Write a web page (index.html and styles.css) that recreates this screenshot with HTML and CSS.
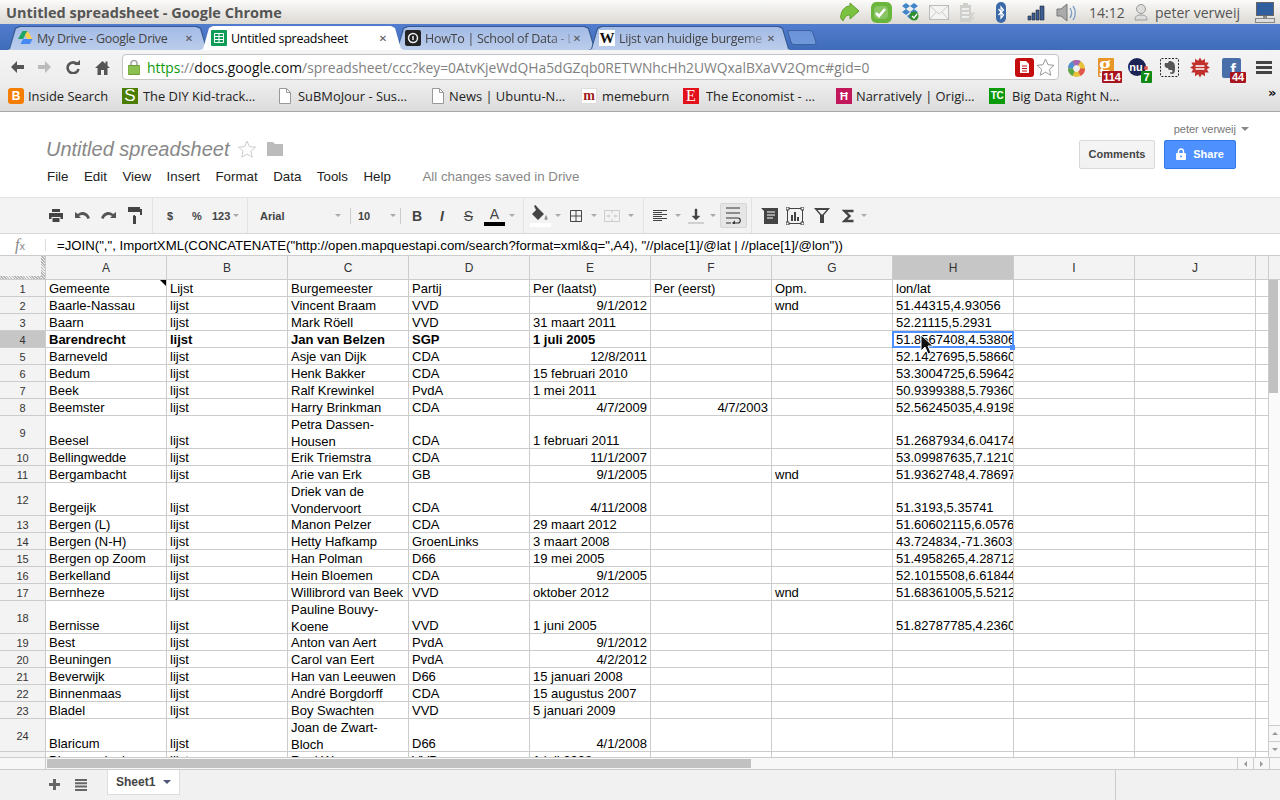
FILE: index.html
```html
<!DOCTYPE html>
<html lang="en">
<head>
<meta charset="utf-8">
<title>Untitled spreadsheet - Google Chrome</title>
<link rel="stylesheet" href="styles.css">
</head>
<body>
<header class="titlebar">
  <span class="wintitle">Untitled spreadsheet - Google Chrome</span>
  <div class="tray">
    <svg class="tray-icons" width="240" height="24" viewBox="838 0 240 24">
      <path d="M842 15c1-6 5-9 9-9V3l9 8-9 8v-4c-3 0-5 1-7 6-2-2-3-4-2-6z" fill="#7cc242" stroke="#5f9e2c"/>
      <path d="M877 2h10c4 0 6 3 6 6v8c0 5-3 7-6 7h-9c-4 0-6-3-6-6V8c0-3 2-6 5-6z" fill="#6ab63c"/>
      <rect x="875" y="6" width="14" height="13" rx="4" fill="#eaf5e0" opacity=".25"/>
      <path d="M877 13l3 3 6-7" fill="none" stroke="#fff" stroke-width="2.6"/>
      <path d="M907 3l4 3-4 3-4-3zM915 3l4 3-4 3-4-3zM907 9l4 3-4 3-4-3zM915 9l4 3-4 3-4-3zM911 14l3 2-3 3-3-3z" fill="#3f87c9"/>
      <circle cx="915" cy="16" r="4.5" fill="#2f8f2f"/><path d="M913 16l2 2 3-4" fill="none" stroke="#fff" stroke-width="1.3"/>
      <rect x="930.500" y="5.500" width="19" height="14" fill="#f4f4f2" stroke="#bbb"/>
      <path d="M931 6l9 8 9-8M931 19l6-7M949 19l-6-7" fill="none" stroke="#ccc"/>
      <path d="M964 3h5v2h3v17h-11V5h3z" fill="#cfcfcb"/><path d="M963 9h7M963 13h7M963 17h7" stroke="#eee" stroke-width="2"/>
      <path d="M972 13l4-1-3 5h3l-5 6 1-6h-2z" fill="#d4d4d0"/>
      <rect x="997" y="2" width="10" height="21" rx="5" fill="#3c69a8"/>
      <path d="M999.500 9l5 6-2.500 3V7l2.500 3-5 5" fill="none" stroke="#fff" stroke-width="1.200"/>
      <path d="M1029 16h3v4h-3zM1033 13h3v7h-3zM1037 10h3v10h-3zM1041 6h4v14h-4z" fill="#3b5f93" stroke="#223" stroke-width=".6"/>
      <path d="M1058 9h4l6-5v17l-6-5h-4z" fill="#aaa" stroke="#777"/>
      <path d="M1071 8c2 3 2 7 0 10M1074 6c3 4 3 10 0 14" fill="none" stroke="#7a9cc6" stroke-width="1.300"/>
    </svg>
    <span class="clock">14:12</span>
    <svg class="user-icon" width="14" height="20" viewBox="0 0 14 20"><circle cx="7" cy="7" r="4.500" fill="#ddd" stroke="#999"/><path d="M1 18c0-4 2-5 6-5s6 1 6 5z" fill="#ddd" stroke="#999"/></svg>
    <span class="username">peter verweij</span>
    <svg class="monitor" width="22" height="24" viewBox="0 0 22 24"><rect x="2.500" y="2.500" width="17" height="13" fill="#2f5f9e" stroke="#666"/><path d="M9 16h4v2H9z" fill="#888"/><rect x="1.500" y="18.500" width="19" height="4" fill="#ddd" stroke="#888"/></svg>
  </div>
</header>

<nav class="tabstrip">
  <div class="tab">
    <svg class="fav" width="16" height="16" viewBox="0 0 16 16"><path d="M5.500 1h5L6 9H1z" fill="#1fa463"/><path d="M10.500 1l5 8h-5L8 5z" fill="#ffd04b"/><path d="M3.500 14h9.500l2.500-5H6z" fill="#4688f4"/></svg>
    <span class="tab-title">My Drive - Google Drive</span><span class="tab-x">✕</span>
  </div>
  <div class="tab active">
    <svg class="fav" width="16" height="16" viewBox="0 0 16 16"><rect width="16" height="16" rx="1" fill="#0f9d58"/><path d="M3.500 3.500h9v9h-9zM3.500 6.500h9M3.500 9.500h9M8 3.500v9" fill="none" stroke="#fff"/></svg>
    <span class="tab-title">Untitled spreadsheet</span><span class="tab-x">✕</span>
  </div>
  <div class="tab">
    <svg class="fav" width="16" height="16" viewBox="0 0 16 16"><rect width="16" height="16" rx="2" fill="#222"/><circle cx="8" cy="8" r="4.500" fill="none" stroke="#eee" stroke-width="1.500"/><path d="M8 6v4" stroke="#eee" stroke-width="1.500"/></svg>
    <span class="tab-title fade">HowTo | School of Data - L</span><span class="tab-x">✕</span>
  </div>
  <div class="tab">
    <span class="wiki-fav">W</span>
    <span class="tab-title fade">Lijst van huidige burgeme</span><span class="tab-x">✕</span>
  </div>
  <div class="newtab"></div>
</nav>

<div class="navbar">
  <svg class="nav-ic first" width="14" height="14" viewBox="0 0 14 14"><path d="M7 1L1 7l6 6V9h7V5H7z" fill="#555"/></svg>
  <svg class="nav-ic gap14" width="14" height="14" viewBox="0 0 14 14"><path d="M7 1l6 6-6 6V9H0V5h7z" fill="#bbb"/></svg>
  <svg class="nav-ic gap14" width="14" height="14" viewBox="0 0 14 14"><path d="M11.500 4.500A5.500 5.500 0 1 0 12.500 9" fill="none" stroke="#555" stroke-width="2.600"/><path d="M8 5h6V0z" fill="#555"/></svg>
  <svg class="nav-ic gap15" width="15" height="15" viewBox="0 0 15 15"><path d="M7.500 1L0 8h2.500v7h3.500v-5h3v5h3.500V8H15l-2.500-2.300V1.500h-2v2.300z" fill="#555"/></svg>
  <div class="omnibox">
    <svg class="lock" width="12" height="16" viewBox="0 0 12 16"><path d="M3 7V4.500a3 3 0 0 1 6 0V7" fill="none" stroke="#aaa" stroke-width="1.600"/><rect y="6.500" width="12" height="9" rx="1" fill="#8cc152" stroke="#6a9a35"/></svg>
    <span class="url"><span class="scheme">https</span><span class="dim">://</span><span class="host">docs.google.com</span><span class="dim">/spreadsheet/ccc?key=0AtvKjeWdQHa5dGZqb0RETWNhcHh2UWQxalBXaVV2Qmc#gid=0</span></span>
    <svg class="omni-end" width="40" height="20" viewBox="0 0 40 20">
      <rect y="1" width="19" height="19" rx="3" fill="#c40d0d"/><path d="M5 4h6l3 3v9H5z" fill="#fff"/><path d="M7 9h5M7 11.500h5M7 14h5" stroke="#c40d0d"/>
      <path d="M30.500 2l2.500 5.700 6 .6-4.600 4 1.400 6-5.300-3.200-5.300 3.200 1.400-6-4.600-4 6-.6z" fill="#fff" stroke="#999"/>
    </svg>
  </div>
  <svg class="ext" width="220" height="34" viewBox="1060 50 220 34">
    <g fill="none" stroke-width="5"><circle cx="1076.500" cy="68.500" r="6" stroke="#e8c33a"/><circle cx="1076.500" cy="68.500" r="6" stroke="#e2574c" pathLength="6" stroke-dasharray="1 5"/><circle cx="1076.500" cy="68.500" r="6" stroke="#5ba84a" pathLength="6" stroke-dasharray="1 5" stroke-dashoffset="-2"/><circle cx="1076.500" cy="68.500" r="6" stroke="#4f8fd6" pathLength="6" stroke-dasharray="1 5" stroke-dashoffset="-3"/><circle cx="1076.500" cy="68.500" r="6" stroke="#a565b5" pathLength="6" stroke-dasharray="1 5" stroke-dashoffset="-4"/></g>
    <rect x="1098" y="58" width="16" height="19" rx="1" fill="#e8952a"/><text x="1099" y="72" class="ext-g">g</text>
    <rect x="1102" y="71" width="20" height="12" rx="1" fill="#a8141e"/><text x="1112" y="81" class="badge">114</text>
    <circle cx="1137" cy="67" r="9" fill="#1c2455"/><text x="1136" y="71" class="ext-nu">nu</text><circle cx="1146" cy="68" r="2" fill="#e2574c"/>
    <rect x="1141" y="71" width="11" height="12" rx="1" fill="#0f8a12"/><text x="1146.500" y="81" class="badge">7</text>
    <rect x="1160.500" y="58.500" width="18" height="18" rx="1" fill="#eee" stroke="#222" stroke-dasharray="2 1.500"/>
    <path d="M1165 63h3l1-2c4 0 6 2 6 6s0 7-3 7c-2 0-2-1-2-2 2 1 3 0 2-2-3 0-4 0-4-2-3 0-4-2-3-5z" fill="#555"/>
    <polygon points="1200,57.500 1201.800,60.700 1205,58.800 1204.900,62.600 1208.700,62.500 1206.800,65.700 1210,67.500 1206.800,69.300 1208.700,72.500 1204.900,72.400 1205,76.200 1201.800,74.300 1200,77.500 1198.200,74.300 1195,76.200 1195.100,72.400 1191.300,72.500 1193.200,69.300 1190,67.500 1193.200,65.700 1191.300,62.500 1195.100,62.600 1195,58.800 1198.200,60.700" fill="#c0302c"/>
    <path d="M1195.500 66h9M1195.500 69h9" stroke="#fff" stroke-width="1.500"/>
    <rect x="1222" y="58" width="19" height="20" rx="2" fill="#4a6ea9"/><text x="1233" y="75" class="ext-f">f</text>
    <rect x="1230" y="72" width="16" height="11" rx="1" fill="#a8141e"/><text x="1238" y="81" class="badge">44</text>
    <path d="M1256 61h16v3h-16zM1256 66h16v3h-16zM1256 71h16v3h-16z" fill="#444"/>
  </svg>
</div>

<div class="bookmarks">
  <div class="bm"><span class="bi bi-blogger">B</span><span>Inside Search</span></div>
  <div class="bm"><span class="bi bi-s">S</span><span>The DIY Kid-track…</span></div>
  <div class="bm"><svg class="bi-doc" width="14" height="16" viewBox="0 0 14 16"><path d="M1.500.5h7l4 4v11h-11z" fill="#fff" stroke="#999"/><path d="M8.500.5v4h4" fill="none" stroke="#999"/></svg><span>SuBMoJour - Sus…</span></div>
  <div class="bm"><svg class="bi-doc" width="14" height="16" viewBox="0 0 14 16"><path d="M1.500.5h7l4 4v11h-11z" fill="#fff" stroke="#999"/><path d="M8.500.5v4h4" fill="none" stroke="#999"/></svg><span>News | Ubuntu-N…</span></div>
  <div class="bm"><span class="bi bi-m">m</span><span>memeburn</span></div>
  <div class="bm"><span class="bi bi-e">E</span><span>The Economist - …</span></div>
  <div class="bm"><span class="bi bi-n">Ħ</span><span>Narratively | Origi…</span></div>
  <div class="bm"><span class="bi bi-tc">TC</span><span>Big Data Right N…</span></div>
  <span class="more">»</span>
</div>

<section class="dochead">
  <div class="doc-left">
    <div class="doc-title">
      <h1>Untitled spreadsheet</h1>
      <svg class="doc-star" width="18" height="18" viewBox="0 0 18 18"><path d="M9 1l2.400 5.600 6.100.6-4.600 4 1.400 6L9 14l-5.300 3.200 1.400-6-4.600-4 6.100-.6z" fill="#fff" stroke="#ccc"/></svg>
      <svg class="doc-folder" width="16" height="14" viewBox="0 0 16 14"><path d="M0 0h6l2 2h8v12H0z" fill="#bbb"/></svg>
    </div>
    <div class="menus">
      <span>File</span><span>Edit</span><span>View</span><span>Insert</span><span>Format</span><span>Data</span><span>Tools</span><span>Help</span>
      <span class="saved">All changes saved in Drive</span>
    </div>
  </div>
  <div class="doc-right">
    <div class="account">peter verweij<i class="caret"></i></div>
    <div class="doc-buttons">
      <button class="btn">Comments</button>
      <button class="btn share"><svg width="10" height="12" viewBox="0 0 10 12"><path d="M2.500 5V3.500a2.500 2.500 0 0 1 5 0V5" fill="none" stroke="#fff" stroke-width="1.400"/><rect y="5" width="10" height="7" rx="1" fill="#fff"/><circle cx="5" cy="8.500" r="1" fill="#4d90fe"/></svg>Share</button>
    </div>
  </div>
</section>

<div class="toolbar">
  <svg class="m0" width="14" height="13" viewBox="0 0 14 13"><path d="M3 0h8v3H3zM0 4h14v6h-2.500V8h-9v2H0zM3.500 9h7v4h-7z" fill="#444"/></svg>
  <svg class="m12" width="15" height="10" viewBox="0 0 15 10"><path d="M0 1v6h6L4 5c3-2 7-1 8.500 3L15 7C13 1 7-1 2.800 3z" fill="#555"/></svg>
  <svg class="m11" width="15" height="10" viewBox="0 0 15 10"><path d="M15 1v6H9l2-2C8 3 4 4 2.500 8L0 7C2 1 8-1 12.200 3z" fill="#555"/></svg>
  <svg class="m12" width="14" height="17" viewBox="0 0 14 17"><path d="M0 0h12v2h2v6H7v2H5.500V8H12V5H0z" fill="#444"/><rect x="5" y="9" width="3" height="8" fill="#444"/></svg>
  <i class="sep m10"></i>
  <span class="tt w8 m14">$</span>
  <span class="tt w11 m17">%</span>
  <span class="tt w17 m9">123</span>
  <i class="arrow m4"></i>
  <i class="sep m8"></i>
  <span class="tt w75 m12">Arial</span>
  <i class="arrow"></i>
  <i class="sep short m9"></i>
  <span class="tt w32 m7">10</span>
  <i class="arrow"></i>
  <i class="sep short m4"></i>
  <span class="tt fmt w10 m11">B</span>
  <span class="tt fmt ital w10 m15">I</span>
  <span class="tt fmt strike w11 m16">S</span>
  <span class="colorA m10">A</span>
  <i class="arrow m4"></i>
  <i class="sep m8"></i>
  <svg class="m6" width="21" height="22" viewBox="0 0 21 22"><path d="M5 1l1.500-1L9 3l6 6-6 6-6-6 4-4z" fill="#444" transform="translate(-1 0)"/><path d="M16 10c2 3 2 5 0 5s-2-2 0-5z" fill="#999"/><rect y="18" width="21" height="4" fill="#fff"/></svg>
  <i class="arrow m4"></i>
  <svg class="m9" width="12" height="12" viewBox="0 0 12 12"><path d="M.5.500h11v11H.500zM6 .5v11M.5 6h11" fill="none" stroke="#444"/></svg>
  <i class="arrow m9"></i>
  <svg class="m7" width="16" height="12" viewBox="0 0 16 12"><path d="M.5.500h15v11H.500zM8 .5v3M8 8.500v3" fill="none" stroke="#ccc"/><path d="M2 6h4M4.500 4.500L6 6 4.500 7.500M14 6h-4M11.500 4.500L10 6l1.500 1.500" fill="none" stroke="#ccc"/></svg>
  <i class="arrow m8"></i>
  <i class="sep m9"></i>
  <svg class="m9" width="14" height="12" viewBox="0 0 14 12"><path d="M0 .5h14M0 2.500h9M0 4.500h14M0 6.500h9M0 8.500h14M0 10.500h9" stroke="#444"/></svg>
  <i class="arrow m8"></i>
  <svg class="m7" width="16" height="16" viewBox="0 0 16 16"><path d="M7 1h2v7h3l-4 4-4-4h3zM0 15h16" fill="#444" stroke="#444" stroke-width=".4"/></svg>
  <i class="arrow m6"></i>
  <div class="wrapbtn m4"><svg width="16" height="17" viewBox="0 0 16 17"><path d="M0 1h14M0 6h14M0 11h7M0 16h5M7 11h5c3 0 3 5 0 5H8" fill="none" stroke="#333" stroke-width="1.200"/><path d="M9 13.500v5l-3-2.500z" fill="#333"/></svg></div>
  <i class="sep m4"></i>
  <svg class="m9" width="17" height="16" viewBox="0 0 17 16"><path d="M0 0h17v16H3V3z" fill="#444"/><path d="M6 4h8M6 7h8M6 10h6" stroke="#fff"/></svg>
  <svg class="m8" width="18" height="18" viewBox="0 0 18 18"><rect x="1.500" y="1.500" width="15" height="15" fill="#f3f3f3" stroke="#444"/><path d="M5 8h2v6H5zM8 5h2v9H8zM11 10h2v4h-2z" fill="#444"/><path d="M0 0h3v3H0zM15 0h3v3h-3zM0 15h3v3H0zM15 15h3v3h-3z" fill="#f3f3f3" stroke="#444"/></svg>
  <svg class="m10" width="16" height="15" viewBox="0 0 16 15"><path d="M0 0h16l-6 7v8H6V7zM3.500 2l4 4.500h1l4-4.500z" fill="#444" fill-rule="evenodd"/></svg>
  <svg class="m12" width="12" height="14" viewBox="0 0 12 14"><path d="M11.500 2H2.500l5 5-5 5h9" fill="none" stroke="#444" stroke-width="2.400"/></svg>
  <i class="arrow m7"></i>
</div>

<div class="formula">
  <span class="fx">f<small>x</small></span>
  <i class="fsep"></i>
  <span class="ftext">=JOIN(",", ImportXML(CONCATENATE("http://open.mapquestapi.com/search?format=xml&amp;q=",A4), "//place[1]/@lat | //place[1]/@lon"))</span>
</div>

<main class="sheet">
  <div class="grid">
    <div class="row head"><div class="corner"></div><div>A</div><div>B</div><div>C</div><div>D</div><div>E</div><div>F</div><div>G</div><div class="on">H</div><div>I</div><div>J</div><div></div></div>
    <div class="row"><div class="n">1</div><div class="noted">Gemeente</div><div>Lijst</div><div>Burgemeester</div><div>Partij</div><div>Per (laatst)</div><div>Per (eerst)</div><div>Opm.</div><div>lon/lat</div><div></div><div></div><div></div></div>
    <div class="row"><div class="n">2</div><div>Baarle-Nassau</div><div>lijst</div><div>Vincent Braam</div><div>VVD</div><div class="r">9/1/2012</div><div></div><div>wnd</div><div>51.44315,4.93056</div><div></div><div></div><div></div></div>
    <div class="row"><div class="n">3</div><div>Baarn</div><div>lijst</div><div>Mark Röell</div><div>VVD</div><div>31 maart 2011</div><div></div><div></div><div>52.21115,5.2931</div><div></div><div></div><div></div></div>
    <div class="row bold"><div class="n on">4</div><div>Barendrecht</div><div>lijst</div><div>Jan van Belzen</div><div>SGP</div><div>1 juli 2005</div><div></div><div></div><div class="plain">51.8567408,4.53806</div><div></div><div></div><div></div></div>
    <div class="row"><div class="n">5</div><div>Barneveld</div><div>lijst</div><div>Asje van Dijk</div><div>CDA</div><div class="r">12/8/2011</div><div></div><div></div><div>52.1427695,5.58660</div><div></div><div></div><div></div></div>
    <div class="row"><div class="n">6</div><div>Bedum</div><div>lijst</div><div>Henk Bakker</div><div>CDA</div><div>15 februari 2010</div><div></div><div></div><div>53.3004725,6.59642</div><div></div><div></div><div></div></div>
    <div class="row"><div class="n">7</div><div>Beek</div><div>lijst</div><div>Ralf Krewinkel</div><div>PvdA</div><div>1 mei 2011</div><div></div><div></div><div>50.9399388,5.79360</div><div></div><div></div><div></div></div>
    <div class="row"><div class="n">8</div><div>Beemster</div><div>lijst</div><div>Harry Brinkman</div><div>CDA</div><div class="r">4/7/2009</div><div class="r">4/7/2003</div><div></div><div>52.56245035,4.9198</div><div></div><div></div><div></div></div>
    <div class="row tall"><div class="n">9</div><div>Beesel</div><div>lijst</div><div class="wrap">Petra Dassen-Housen</div><div>CDA</div><div>1 februari 2011</div><div></div><div></div><div>51.2687934,6.04174</div><div></div><div></div><div></div></div>
    <div class="row"><div class="n">10</div><div>Bellingwedde</div><div>lijst</div><div>Erik Triemstra</div><div>CDA</div><div class="r">11/1/2007</div><div></div><div></div><div>53.09987635,7.1210</div><div></div><div></div><div></div></div>
    <div class="row"><div class="n">11</div><div>Bergambacht</div><div>lijst</div><div>Arie van Erk</div><div>GB</div><div class="r">9/1/2005</div><div></div><div>wnd</div><div>51.9362748,4.78697</div><div></div><div></div><div></div></div>
    <div class="row tall"><div class="n">12</div><div>Bergeijk</div><div>lijst</div><div class="wrap">Driek van de Vondervoort</div><div>CDA</div><div class="r">4/11/2008</div><div></div><div></div><div>51.3193,5.35741</div><div></div><div></div><div></div></div>
    <div class="row"><div class="n">13</div><div>Bergen (L)</div><div>lijst</div><div>Manon Pelzer</div><div>CDA</div><div>29 maart 2012</div><div></div><div></div><div>51.60602115,6.0576</div><div></div><div></div><div></div></div>
    <div class="row"><div class="n">14</div><div>Bergen (N-H)</div><div>lijst</div><div>Hetty Hafkamp</div><div>GroenLinks</div><div>3 maart 2008</div><div></div><div></div><div>43.724834,-71.36036</div><div></div><div></div><div></div></div>
    <div class="row"><div class="n">15</div><div>Bergen op Zoom</div><div>lijst</div><div>Han Polman</div><div>D66</div><div>19 mei 2005</div><div></div><div></div><div>51.4958265,4.28712</div><div></div><div></div><div></div></div>
    <div class="row"><div class="n">16</div><div>Berkelland</div><div>lijst</div><div>Hein Bloemen</div><div>CDA</div><div class="r">9/1/2005</div><div></div><div></div><div>52.1015508,6.61844</div><div></div><div></div><div></div></div>
    <div class="row"><div class="n">17</div><div>Bernheze</div><div>lijst</div><div>Willibrord van Beek</div><div>VVD</div><div>oktober 2012</div><div></div><div>wnd</div><div>51.68361005,5.5212</div><div></div><div></div><div></div></div>
    <div class="row tall"><div class="n">18</div><div>Bernisse</div><div>lijst</div><div class="wrap">Pauline Bouvy-Koene</div><div>VVD</div><div>1 juni 2005</div><div></div><div></div><div>51.82787785,4.2360</div><div></div><div></div><div></div></div>
    <div class="row"><div class="n">19</div><div>Best</div><div>lijst</div><div>Anton van Aert</div><div>PvdA</div><div class="r">9/1/2012</div><div></div><div></div><div></div><div></div><div></div><div></div></div>
    <div class="row"><div class="n">20</div><div>Beuningen</div><div>lijst</div><div>Carol van Eert</div><div>PvdA</div><div class="r">4/2/2012</div><div></div><div></div><div></div><div></div><div></div><div></div></div>
    <div class="row"><div class="n">21</div><div>Beverwijk</div><div>lijst</div><div>Han van Leeuwen</div><div>D66</div><div>15 januari 2008</div><div></div><div></div><div></div><div></div><div></div><div></div></div>
    <div class="row"><div class="n">22</div><div>Binnenmaas</div><div>lijst</div><div>André Borgdorff</div><div>CDA</div><div>15 augustus 2007</div><div></div><div></div><div></div><div></div><div></div><div></div></div>
    <div class="row"><div class="n">23</div><div>Bladel</div><div>lijst</div><div>Boy Swachten</div><div>VVD</div><div>5 januari 2009</div><div></div><div></div><div></div><div></div><div></div><div></div></div>
    <div class="row tall"><div class="n">24</div><div>Blaricum</div><div>lijst</div><div class="wrap">Joan de Zwart-Bloch</div><div>D66</div><div class="r">4/1/2008</div><div></div><div></div><div></div><div></div><div></div><div></div></div>
    <div class="row"><div class="n">25</div><div>Bloemendaal</div><div>lijst</div><div>Roel Wever</div><div>VVD</div><div>1 juli 2008</div><div></div><div></div><div></div><div></div><div></div><div></div></div>
  </div>
  <div class="vbar">
    <div class="vhead"></div>
    <div class="vthumb"></div>
    <div class="vbtns"><div class="vbtn"><i class="up"></i></div><div class="vbtn"><i class="down"></i></div></div>
  </div>
  <div class="selection"><i class="handle"></i></div>
  <svg class="cursor" width="14" height="21" viewBox="0 0 14 21"><path d="M1 1v16l4-4 3 7 3-1-3-7h5z" fill="#111" stroke="#fff"/></svg>
</main>

<div class="hbar">
  <div class="hleft"></div>
  <div class="htrack"><div class="hthumb"></div></div>
  <div class="hbtn"><i class="left"></i></div>
  <div class="hbtn"><i class="right"></i></div>
  <div class="hend"></div>
</div>

<footer class="sheetbar">
  <svg class="add" width="11" height="11" viewBox="0 0 11 11"><path d="M4 0h3v4h4v3H7v4H4V7H0V4h4z" fill="#666"/></svg>
  <svg class="list" width="12" height="12" viewBox="0 0 12 12"><path d="M0 0h12v2H0zM0 3.300h12v2H0zM0 6.600h12v2H0zM0 10h12v2H0z" fill="#666"/></svg>
  <div class="sheet-tab">Sheet1<i class="tab-caret"></i></div>
  <i class="status-sep"></i>
</footer>
</body>
</html>
```
FILE: styles.css
```css
* { box-sizing: border-box; }
html, body { margin: 0; padding: 0; width: 1280px; height: 800px; overflow: hidden; background: #fff; }
body { display: flex; flex-direction: column; font-family: "Liberation Sans", Arial, sans-serif; font-size: 13px; color: #000; }
svg { display: block; flex: none; }
i { display: block; flex: none; }

/* window title bar */
.titlebar { height: 24px; flex: none; display: flex; align-items: center; padding: 0 4px 0 6px; background: linear-gradient(#fbfbfa, #dcd9d3); font-family: "Open Sans", sans-serif; color: #555; }
.wintitle { font-size: 14.5px; font-weight: 700; white-space: nowrap; }
.tray { margin-left: auto; display: flex; align-items: center; }
.tray-icons { margin-right: 12px; }
.clock { font-size: 14px; width: 35px; white-space: nowrap; }
.user-icon { margin-left: 10px; }
.username { font-size: 14px; margin-left: 7px; width: 88px; white-space: nowrap; }
.monitor { margin-left: 11px; }

/* tabs */
.tabstrip { height: 26px; flex: none; display: flex; align-items: flex-end; padding-left: 6px; background: linear-gradient(#527cce, #3f6cba); font-family: "Open Sans", sans-serif; }
.tab { position: relative; width: 204px; height: 24px; margin-right: -10px; padding: 0 15px 0 11px; display: flex; align-items: center; font-size: 12.5px; letter-spacing: -.27px; color: #444;
  background: #34588f;
  clip-path: polygon(0 100%, 3px 96%, 9px 8%, 13px 0, calc(100% - 13px) 0, calc(100% - 9px) 8%, calc(100% - 3px) 96%, 100% 100%); }
.tab::before { content: ""; position: absolute; inset: 1px 1px 0 1px; background: linear-gradient(#a3bbe6, #bccdeb);
  clip-path: polygon(0 100%, 3px 96%, 9px 8%, 13px 0, calc(100% - 13px) 0, calc(100% - 9px) 8%, calc(100% - 3px) 96%, 100% 100%); }
.tab.active { z-index: 2; color: #000; background: #fff; }
.tab.active::before { background: #fff; }
.tab > * { position: relative; }
.fav { margin-right: 4px; }
.wiki-fav { flex: none; width: 16px; height: 16px; margin-right: 4px; background: #fff; color: #111; font: 700 15px/16px "Liberation Serif", serif; letter-spacing: 0; text-align: center; }
.tab-title { flex: 1; min-width: 0; white-space: nowrap; }
.fade { color: #444; -webkit-mask-image: linear-gradient(to right, #000 85%, rgba(0,0,0,.25)); mask-image: linear-gradient(to right, #000 85%, rgba(0,0,0,.25)); }
.tab-x { flex: none; width: 12px; font-size: 10px; font-weight: 700; color: #555; text-align: center; font-family: "DejaVu Sans", sans-serif; letter-spacing: 0; }
.newtab { width: 26px; height: 15px; margin: 0 0 5px 7px; background: linear-gradient(#6b92d8, #7099dc); border: 1px solid #3d639f; border-radius: 3px; transform: skewX(18deg); }

/* address bar */
.navbar { height: 34px; flex: none; display: flex; align-items: center; background: linear-gradient(#f4f4f4, #ededed); }
.first { margin-left: 10px; }
.gap14 { margin-left: 14px; }
.gap15 { margin-left: 15px; }
.omnibox { width: 937px; height: 26px; margin-left: 12px; padding: 0 3px 0 5px; display: flex; align-items: center; background: #fff; border: 1px solid #c4c4c4; border-radius: 4px; font-family: "Open Sans", sans-serif; }
.lock { margin-right: 7px; }
.url { font-size: 13.83px; white-space: nowrap; flex: 1; min-width: 0; overflow: hidden; }
.scheme { color: #0a9a0a; }
.dim { color: #808080; }
.host { color: #111; }
.omni-end { margin-left: 4px; }
.ext { margin-left: 1px; }
.ext-g { font: 700 24px "Liberation Serif", serif; fill: #fff; }
.ext-nu { font: 700 11px "Liberation Sans", sans-serif; fill: #fff; text-anchor: middle; }
.ext-f { font: 700 17px "Liberation Sans", sans-serif; fill: #fff; text-anchor: middle; }
.badge { font: 700 11px "Liberation Sans", sans-serif; fill: #fff; text-anchor: middle; }

/* bookmarks */
.bookmarks { height: 28px; flex: none; display: flex; align-items: center; padding: 0 0 3px 8px; border-bottom: 1px solid #a8a8a8; background: linear-gradient(#ededed, #dcdcdc); font-family: "Open Sans", sans-serif; font-size: 12.9px; color: #222; white-space: nowrap; }
.bm { display: flex; align-items: center; gap: 5px; flex: none; }
.bm:nth-child(1) { width: 114px; gap: 4px; }
.bm:nth-child(2) { width: 156px; }
.bm:nth-child(3) { width: 153px; }
.bm:nth-child(4) { width: 150px; gap: 3px; }
.bm:nth-child(5) { width: 102px; }
.bm:nth-child(6) { width: 153px; gap: 7px; }
.bm:nth-child(7) { width: 153px; gap: 4px; }
.bm:nth-child(8) { width: 279px; gap: 7px; }
.bi { flex: none; width: 16px; height: 16px; display: flex; align-items: center; justify-content: center; font: 700 12px/16px "Liberation Sans", sans-serif; color: #fff; }
.bi-blogger { background: #f57d00; border-radius: 3px; }
.bi-s { background: #4a7d00; font: 400 17px/16px "Liberation Sans", sans-serif; }
.bi-m { background: #fff; color: #a11a1a; border: 1px solid #ddd; font: 700 14px/12px "Liberation Serif", serif; }
.bi-e { background: #e2111a; font: 400 16px/16px "Liberation Serif", serif; }
.bi-n { background: #c2185b; font-size: 11px; }
.bi-tc { background: #0a9a0a; font-size: 10px; letter-spacing: -.5px; }
.bi-doc { margin-right: 1px; }
.more { margin-bottom: 8px; font: 700 13px "DejaVu Sans", sans-serif; color: #111; }

/* document header */
.dochead { height: 85px; flex: none; display: flex; justify-content: space-between; }
.doc-left { padding: 25px 0 0 46px; }
.doc-title { display: flex; align-items: center; height: 24px; }
.doc-title h1 { margin: 0; font-size: 20px; font-weight: 400; font-style: italic; color: #888; white-space: nowrap; }
.doc-star { margin-left: 9px; }
.doc-folder { margin-left: 11px; }
.menus { display: flex; gap: 15.5px; margin: 8px 0 0 1px; line-height: 16px; font-size: 13.33px; color: #222; }
.saved { margin-left: 16px; color: #888; }
.doc-right { padding: 10px 44px 0 0; display: flex; flex-direction: column; align-items: flex-end; }
.account { display: flex; align-items: center; margin-right: -13px; height: 14px; font-size: 11px; color: #777; }
.caret { margin-left: 5px; border: 4px solid transparent; border-top-color: #888; border-bottom-width: 0; }
.doc-buttons { display: flex; gap: 9px; margin-top: 4px; }
.btn { height: 29px; width: 76px; padding: 0 0 2px; border: 1px solid #d9d9d9; border-radius: 2px; background: linear-gradient(#f5f5f5, #f1f1f1); font: 700 11px "Liberation Sans", sans-serif; color: #444; }
.share { width: 72px; display: flex; align-items: center; justify-content: center; gap: 7px; background: #4d90fe; border-color: #3079ed; color: #fff; }

/* toolbar */
.toolbar { height: 37px; flex: none; display: flex; align-items: center; padding-left: 49px; background: #f3f3f3; border-top: 1px solid #e2e2e2; border-bottom: 1px solid #d9d9d9; }
.m0 { margin-left: 0; } .m4 { margin-left: 4px; } .m6 { margin-left: 6px; } .m7 { margin-left: 7px; } .m8 { margin-left: 8px; } .m9 { margin-left: 9px; } .m10 { margin-left: 10px; } .m11 { margin-left: 11px; } .m12 { margin-left: 12px; } .m14 { margin-left: 14px; } .m15 { margin-left: 15px; } .m16 { margin-left: 16px; } .m17 { margin-left: 17px; }
.sep { width: 1px; align-self: stretch; background: #e2e2e2; }
.sep.short { align-self: center; height: 16px; background: #ccc; }
.arrow { width: 6px; height: 3px; border: 3px solid transparent; border-top-color: #aaa; border-bottom-width: 0; }
.tt { flex: none; font-size: 11px; font-weight: 700; color: #444; white-space: nowrap; }
.w8 { width: 8px; } .w10 { width: 10px; } .w11 { width: 11px; } .w17 { width: 17px; } .w32 { width: 32px; } .w75 { width: 75px; }
.fmt { font-size: 14px; text-align: center; }
.ital { font-style: italic; }
.strike { text-decoration: line-through; font-weight: 400; }
.colorA { flex: none; width: 21px; height: 19px; align-self: center; margin-top: 2px; text-align: center; font-size: 14px; line-height: 14px; color: #444; border-bottom: 4px solid #000; }
.wrapbtn { width: 27px; height: 25px; display: flex; align-items: center; justify-content: center; background: #e6e6e6; border: 1px solid #d6d6d6; border-radius: 2px; }

/* formula bar */
.formula { height: 22px; flex: none; display: flex; align-items: center; background: #fff; border-bottom: 1px solid #ccc; padding-left: 15px; white-space: nowrap; }
.fx { width: 30px; font: italic 16px "Liberation Serif", serif; color: #888; }
.fx small { font-size: 11px; font-style: normal; font-family: "Liberation Sans", sans-serif; }
.fsep { width: 1px; height: 12px; background: #ddd; }
.ftext { margin-left: 11px; padding-top: 1px; font-size: 13.2px; }

/* sheet */
.sheet { position: relative; height: 501px; flex: none; display: flex; overflow: hidden; }
.grid { width: 1269px; flex: none; }
.row { display: grid; grid-template-columns: 46px repeat(10, 121px) 13px; height: 17px; }
.row.tall { height: 33px; }
.row > div { display: flex; align-items: flex-end; padding: 0 0 0 3px; line-height: 14px; overflow: hidden; white-space: nowrap; border-right: 1px solid #ccc; border-bottom: 1px solid #ccc; }
.row.bold { font-weight: 700; }
.row > .plain { font-weight: 400; }
.row > .r { justify-content: flex-end; padding-right: 3px; }
.row > .wrap { white-space: normal; align-items: flex-start; line-height: 17px; padding-right: 2px; }
.row > .n { padding: 1px 0 0; align-items: center; justify-content: center; font-size: 11px; font-weight: 400; color: #333; background: #f3f3f3; }
.row > .n.on, .head > .on { background: #c6c6c6; }
.row > .noted { position: relative; }
.noted::after { content: ""; position: absolute; top: 0; right: 0; border-style: solid; border-width: 0 6px 6px 0; border-color: transparent #000 transparent transparent; }
.row.head { height: 24px; }
.head > div { padding: 0; align-items: center; justify-content: center; font-size: 12px; color: #333; background: #f3f3f3; }
.head > .corner { background-color: #f3f3f3;
  background-image: repeating-linear-gradient(45deg, #b5b5b5 0 1px, #eee 1px 2px), repeating-linear-gradient(45deg, #b5b5b5 0 1px, #eee 1px 2px);
  background-size: 4px 100%, 100% 3px; background-position: right top, left bottom; background-repeat: no-repeat; }
.vbar { flex: 1; display: flex; flex-direction: column; background: #fafafa; }
.vhead { height: 24px; flex: none; background: #f3f3f3; border-bottom: 1px solid #ccc; }
.vthumb { width: 9px; height: 113px; flex: none; background: #c1c1c1; }
.vbtns { margin-top: auto; }
.vbtn { height: 16px; display: flex; align-items: center; justify-content: center; border-top: 1px solid #ccc; background: #f7f7f7; }
.up { border: 3px solid transparent; border-bottom: 3px solid #999; border-top-width: 0; }
.down { border: 3px solid transparent; border-top: 3px solid #999; border-bottom-width: 0; }
.selection { position: absolute; left: 892px; top: 75px; width: 122px; height: 17px; border: 2px solid #4d90fe; }
.handle { position: absolute; right: -3px; bottom: -4px; width: 5px; height: 5px; background: #4d90fe; }
.cursor { position: absolute; left: 920px; top: 78px; }

/* horizontal scrollbar */
.hbar { height: 13px; flex: none; display: flex; background: #f7f7f7; border-top: 1px solid #ccc; border-bottom: 1px solid #ccc; }
.hleft { width: 46px; flex: none; border-right: 1px solid #ccc; }
.htrack { width: 1191px; flex: none; padding: 1px 0 0 1px; }
.hthumb { width: 704px; height: 9px; background: #c1c1c1; }
.hbtn { width: 16px; flex: none; display: flex; align-items: center; justify-content: center; border-left: 1px solid #ccc; }
.left { border: 3px solid transparent; border-right: 3px solid #999; border-left-width: 0; }
.right { border: 3px solid transparent; border-left: 3px solid #999; border-right-width: 0; }
.hend { flex: 1; border-left: 1px solid #ccc; }

/* sheet tabs */
.sheetbar { height: 30px; flex: 1; display: flex; align-items: flex-start; background: #f1f1f1; padding-left: 49px; }
.add { margin-top: 9px; }
.list { margin: 9px 0 0 15px; }
.sheet-tab { width: 73px; height: 25px; margin-left: 20px; padding-left: 8px; display: flex; align-items: center; background: #fff; border: 1px solid #ddd; border-top: 0; font-size: 12px; font-weight: 700; color: #444; }
.tab-caret { margin-left: 8px; border: 4px solid transparent; border-top-color: #4a5578; border-bottom-width: 0; }
.status-sep { width: 1px; height: 30px; margin-left: 935px; background: #ccc; }
```
